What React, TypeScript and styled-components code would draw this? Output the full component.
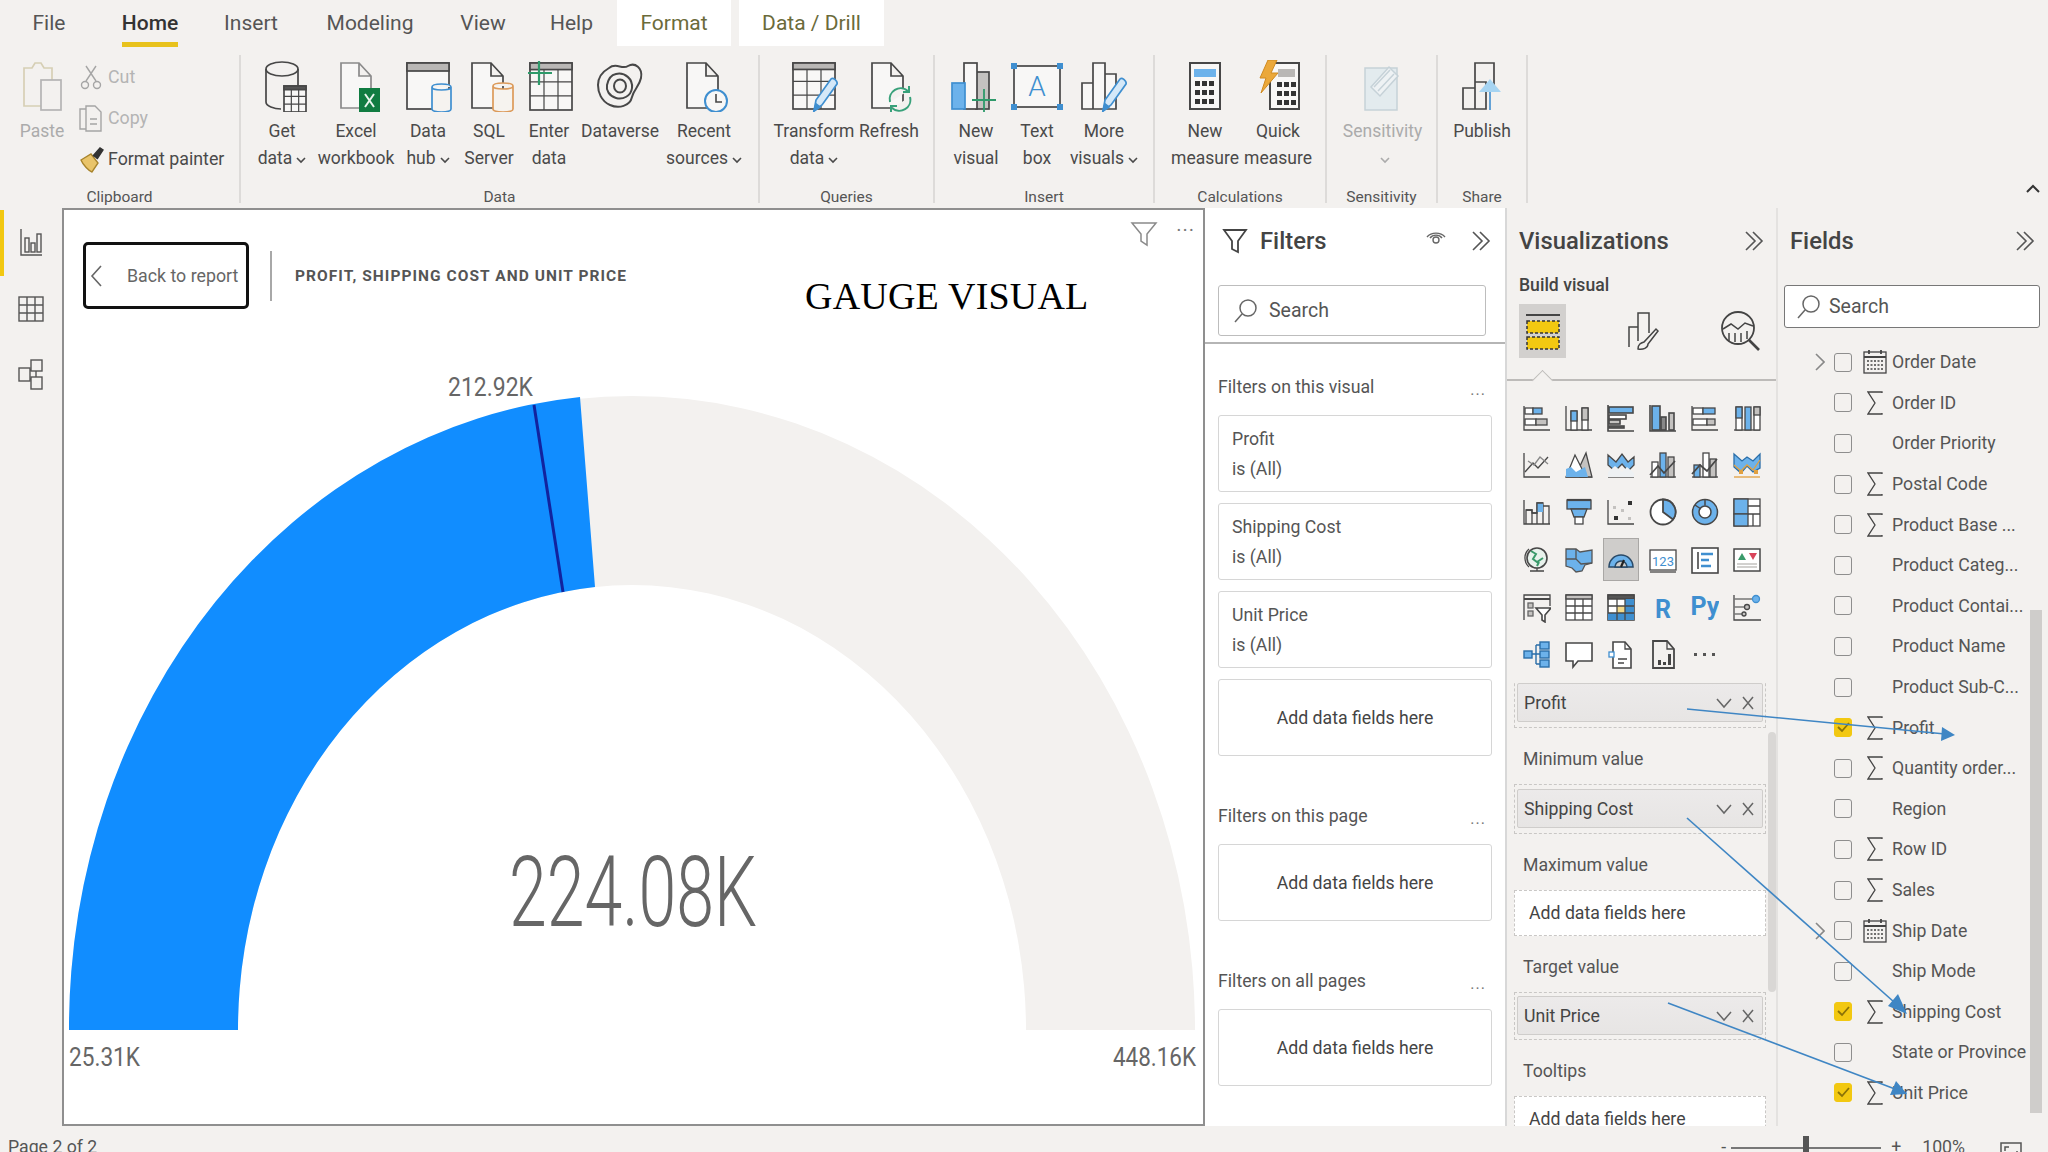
import React from 'react'
import styled, { createGlobalStyle } from 'styled-components'

const BLUE = '#6cb2eb'
const DEEP = '#3f8fd0'
const GREY = '#c4c2c0'
const INK = '#474747'

const GlobalStyle = createGlobalStyle`
  html, body {
    margin: 0;
    padding: 0;
    width: 2048px;
    height: 1152px;
    overflow: hidden;
    background: #f3f1ef;
  }
  * { box-sizing: border-box; }
  body {
    font-family: Roboto, "Liberation Sans", sans-serif;
    color: #4a4a4a;
  }
`

const Shell = styled.div`
  position: relative;
  width: 2048px;
  height: 1152px;
  display: flex;
  flex-direction: column;
  overflow: hidden;
`

/* ---------- tabs ---------- */
const TabBar = styled.div`
  height: 46px;
  display: flex;
  flex: none;
`
const Tab = styled.div<{ $w: number; $active?: boolean; $context?: boolean }>`
  position: relative;
  width: ${p => p.$w}px;
  display: flex;
  align-items: center;
  justify-content: center;
  font-size: 21px;
  color: ${p => (p.$context ? '#6b6b3a' : p.$active ? '#333' : '#555')};
  font-weight: ${p => (p.$active ? 500 : 400)};
  background: ${p => (p.$context ? '#fff' : 'transparent')};
  margin-right: ${p => (p.$context ? 8 : 0)}px;
  ${p =>
    p.$active &&
    `&::after {
      content: '';
      position: absolute;
      left: 24px;
      right: 24px;
      bottom: -1px;
      height: 5px;
      background: #e8c21c;
    }`}
`

/* ---------- ribbon ---------- */
const Ribbon = styled.div`
  height: 162px;
  flex: none;
  display: flex;
  padding-top: 9px;
`
const Group = styled.div<{ $w: number }>`
  width: ${p => p.$w}px;
  height: 148px;
  flex: none;
  display: flex;
  flex-direction: column;
  border-right: 2px solid #dddbd9;
`
const GroupBody = styled.div`
  flex: 1;
  display: flex;
  align-items: flex-start;
`
const GroupLabel = styled.div`
  height: 22px;
  text-align: center;
  font-size: 15.5px;
  line-height: 22px;
  color: #555;
  margin-bottom: -5px;
`
const BigButton = styled.div<{ $w: number; $off?: boolean }>`
  width: ${p => p.$w}px;
  flex: none;
  display: flex;
  flex-direction: column;
  align-items: center;
  padding-top: 5px;
  color: ${p => (p.$off ? '#ababab' : '#4a4a4a')};
`
const ButtonText = styled.div`
  margin-top: 6px;
  font-size: 17.5px;
  line-height: 27px;
  text-align: center;
  white-space: nowrap;
  height: 54px;
`
const Caret = styled.svg`
  width: 10px;
  height: 7px;
  margin-left: 4px;
  fill: none;
  stroke: currentColor;
  stroke-width: 1.6;
`
const RibbonSvg = styled.svg`
  width: 52px;
  height: 52px;
  fill: none;
  stroke: ${INK};
  stroke-width: 1.7;
  flex: none;
`
const SmallColumn = styled.div`
  margin-left: -6px;
  padding-top: 1px;
  display: flex;
  flex-direction: column;
`
const SmallRow = styled.div<{ $off?: boolean }>`
  height: 41px;
  display: flex;
  align-items: center;
  gap: 4px;
  font-size: 17.8px;
  white-space: nowrap;
  color: ${p => (p.$off ? '#b4b4b4' : '#4a4a4a')};
`
const SmallSvg = styled.svg`
  width: 26px;
  height: 28px;
  fill: none;
  stroke: #a5a5a5;
  stroke-width: 1.4;
  flex: none;
`
const RibbonCollapse = styled.svg`
  width: 16px;
  height: 10px;
  margin: 129px 0 0 497px;
  fill: none;
  stroke: #333;
  stroke-width: 2;
`

const Down = () => (
  <Caret viewBox="0 0 10 7">
    <path d="M1 1l4 4 4-4" />
  </Caret>
)

const Table = ({ x, y, w, h, head = '#b9b7b5' }: { x: number; y: number; w: number; h: number; head?: string }) => (
  <g>
    <rect x={x} y={y} width={w} height={h} fill="#f8f7f6" />
    <rect x={x} y={y} width={w} height={h * 0.14} fill={head} />
    <path d={`M${x} ${y + h * 0.4}h${w}M${x} ${y + h * 0.7}h${w}M${x + w / 3} ${y + h * 0.14}v${h * 0.86}M${x + (2 * w) / 3} ${y + h * 0.14}v${h * 0.86}`} strokeWidth="1.2" />
  </g>
)
const Doc = ({ x = 10, w = 32, stroke }: { x?: number; w?: number; stroke?: string }) => (
  <path d={`M${x} 3h${w - 12}l12 13v32h-${w}zM${x + w - 12} 3v13h12`} fill="#f8f7f6" stroke={stroke} />
)
const Can = ({ x, y, w, h, c }: { x: number; y: number; w: number; h: number; c: string }) => (
  <path
    d={`M${x} ${y + 3}c0-4 ${w}-4 ${w} 0v${h - 6}c0 4-${w} 4-${w} 0zM${x} ${y + 3}c0 4 ${w} 4 ${w} 0`}
    stroke={c}
    fill="#f6f3ef"
  />
)
const Pen = ({ dx = 0, dy = 0 }: { dx?: number; dy?: number }) => (
  <g transform={`translate(${dx} ${dy})`}>
    <path d="M23 47l2-11 15-21c2-2 7 2 6 5L31 41z" fill="#d4e8f8" stroke={DEEP} />
    <path d="M23 47l2-7 4 3z" fill={DEEP} stroke={DEEP} />
  </g>
)
const KeyDots = ({ x, y }: { x: number; y: number }) => (
  <g fill="#333" stroke="none">
    {[0, 1, 2].map(r =>
      [0, 1, 2].map(c => <rect key={`${r}${c}`} x={x + c * 7} y={y + r * 9} width="5" height="5" />)
    )}
  </g>
)

const ribbonIcons: Record<string, React.ReactNode> = {
  paste: (
    <g stroke="#d6cfb5">
      <path d="M8 8h8l3-5h6l3 5h8v38H8z" />
      <rect x="25" y="20" width="20" height="30" stroke="#b4b4b4" fill="#f3f1ef" />
    </g>
  ),
  get: (
    <g>
      <ellipse cx="26" cy="9" rx="16" ry="7" />
      <path d="M10 9v33c0 4 8 7 15 7M42 9v17" />
      <Table x={28} y={26} w={22} h={26} head="#555" />
    </g>
  ),
  excel: (
    <g>
      <Doc x={11} w={30} stroke="#8a8a8a" />
      <rect x="29" y="28" width="21" height="24" fill="#107c41" stroke="none" />
      <path d="M35 34l9 13M44 34l-9 13" stroke="#e8f4ec" strokeWidth="2" />
    </g>
  ),
  hub: (
    <g>
      <rect x="5" y="3" width="42" height="46" fill="#f8f7f6" />
      <rect x="5" y="3" width="42" height="8" fill="#b9b7b5" />
      <Can x={30} y={24} w={19} h={28} c={DEEP} />
    </g>
  ),
  sql: (
    <g>
      <Doc x={9} w={31} />
      <Can x={30} y={23} w={20} h={29} c="#dc9a5a" />
    </g>
  ),
  enter: (
    <g>
      <Table x={7} y={3} w={42} h={47} />
      <path d="M16 1v24M5 13h24" stroke="#2e9a6a" strokeWidth="2.2" />
    </g>
  ),
  dataverse: (
    <g strokeWidth="2">
      <path d="M15 8c7-6 13 2 19-2 7-4 15 2 13 12-2 9-7 11-9 19-2 9-13 12-22 8C7 41 4 32 4 25 4 17 8 12 15 8z" />
      <path d="M22 14c9-2 17 5 16 14-1 8-9 12-16 10-7-2-10-8-9-13 1-5 4-10 9-11z" />
      <ellipse cx="26" cy="26" rx="6" ry="6.5" />
    </g>
  ),
  recent: (
    <g>
      <Doc x={9} w={31} />
      <circle cx="38" cy="41" r="11" fill="#f8f7f6" stroke={DEEP} strokeWidth="2" />
      <path d="M38 34v8h6" strokeWidth="1.6" />
    </g>
  ),
  transform: (
    <g>
      <Table x={5} y={3} w={42} h={46} />
      <Pen dx={3} dy={4} />
    </g>
  ),
  refresh: (
    <g>
      <Doc x={9} w={31} />
      <g stroke="#38a17a" strokeWidth="2">
        <path d="M27 42a11 11 0 0 1 18-11" fill="#f3f1ef" />
        <path d="M47 37a11 11 0 0 1-18 11" fill="#f3f1ef" />
        <path d="M46 26v6h-6M28 52v-6h6" />
      </g>
    </g>
  ),
  newvisual: (
    <g>
      <rect x="26" y="12" width="13" height="37" fill={GREY} />
      <rect x="14" y="3" width="13" height="46" fill="#f8f7f6" />
      <rect x="2" y="23" width="13" height="26" fill={BLUE} stroke={DEEP} />
      <path d="M34 29v23M22 40h24" stroke="#2e9a6a" strokeWidth="1.8" />
    </g>
  ),
  textbox: (
    <g>
      <rect x="3" y="6" width="46" height="41" fill="#f8f7f6" />
      <g fill={DEEP} stroke="none">
        <rect x="0" y="3" width="6" height="6" />
        <rect x="46" y="3" width="6" height="6" />
        <rect x="0" y="44" width="6" height="6" />
        <rect x="46" y="44" width="6" height="6" />
      </g>
      <text x="26" y="36" textAnchor="middle" fontSize="28" fontWeight="300" fill={DEEP} stroke="none" fontFamily="Roboto, sans-serif">A</text>
    </g>
  ),
  more: (
    <g>
      <path d="M4 49V23h11v26zM15 49V3h12v46zM27 49V14h11v35z" fill="#f8f7f6" />
      <Pen dx={2} dy={4} />
    </g>
  ),
  measure: (
    <g>
      <rect x="11" y="3" width="30" height="46" fill="#f8f7f6" strokeWidth="2" />
      <rect x="15" y="9" width="22" height="8" fill={BLUE} stroke="none" />
      <KeyDots x={16} y={21} />
    </g>
  ),
  quick: (
    <g>
      <rect x="18" y="3" width="29" height="46" fill="#f8f7f6" strokeWidth="2" />
      <rect x="26" y="9" width="17" height="8" fill="#b9b7b5" stroke="none" />
      <KeyDots x={25} y={22} />
      <path d="M16 0h9l-6 13h7L9 33l5-15H8z" fill="#eba83a" stroke="#d08a20" strokeWidth="1" />
    </g>
  ),
  sensitivity: (
    <g stroke="#c6d2d8">
      <rect x="8" y="8" width="32" height="42" fill="#e3ebee" strokeWidth="1.5" />
      <path d="M14 27L32 7l9 9-18 20z" fill="#eef2f4" strokeWidth="1.5" />
      <path d="M17 27l16-17M21 31l16-17" strokeWidth="1.5" />
    </g>
  ),
  publish: (
    <g>
      <path d="M7 49V28h12v21zM19 49V22h11v27zM19 22V3h19v28" fill="#f3f1ef" />
      <path d="M34 50V22" stroke={DEEP} strokeWidth="1.6" />
      <path d="M23 32l11-13 11 13z" fill="#a6d4f2" stroke="none" />
    </g>
  ),
}

const Big = ({ w, icon, lines, caret, off }: { w: number; icon: string; lines: string[]; caret?: boolean; off?: boolean }) => (
  <BigButton $w={w} $off={off}>
    <RibbonSvg viewBox="0 0 52 52">{ribbonIcons[icon]}</RibbonSvg>
    <ButtonText>
      {lines[0]}
      <br />
      {lines[1]}
      {caret && <Down />}
    </ButtonText>
  </BigButton>
)

/* ---------- main area ---------- */
const Main = styled.div`
  flex: 1;
  min-height: 0;
  display: flex;
`
const NavRail = styled.div`
  width: 62px;
  flex: none;
  padding-top: 2px;
  display: flex;
  flex-direction: column;
`
const NavItem = styled.div<{ $active?: boolean }>`
  height: 66px;
  display: flex;
  align-items: center;
  justify-content: center;
  border-left: 4px solid ${p => (p.$active ? '#f2c811' : 'transparent')};
  padding-right: 4px;
`
const NavSvg = styled.svg`
  width: 26px;
  height: 34px;
  fill: none;
  stroke: #555;
  stroke-width: 1.4;
`
const ReportCanvas = styled.div`
  position: relative;
  width: 1143px;
  flex: none;
  background: #fff;
  border: 2px solid #8f8f8f;
  display: flex;
  flex-direction: column;
`
const CanvasTools = styled.div`
  position: absolute;
  top: 10px;
  right: 8px;
  display: flex;
  align-items: center;
  gap: 18px;
`
const ToolDots = styled.div`
  font-size: 20px;
  letter-spacing: 1px;
  line-height: 12px;
  height: 20px;
  color: #777;
`
const ToolFunnel = styled.svg`
  width: 28px;
  height: 28px;
  fill: none;
  stroke: #8a8a8a;
  stroke-width: 1.5;
`
const CanvasHeader = styled.div`
  display: flex;
  align-items: center;
  padding: 32px 0 0 19px;
  height: 99px;
  flex: none;
`
const BackButton = styled.div`
  width: 166px;
  height: 67px;
  border: 3px solid #111;
  border-radius: 5px;
  display: flex;
  align-items: center;
  padding-left: 4px;
  font-size: 17.8px;
  color: #666;
  white-space: nowrap;
  flex: none;
`
const BackChevron = styled.svg`
  width: 13px;
  height: 24px;
  margin-right: 24px;
  fill: none;
  stroke: #666;
  stroke-width: 1.6;
  flex: none;
`
const HeaderRule = styled.div`
  width: 2px;
  height: 50px;
  margin: 0 23px 0 21px;
  background: #a8a8a8;
`
const ReportTitle = styled.div`
  width: 510px;
  font-size: 15.5px;
  font-weight: 700;
  letter-spacing: 1.05px;
  color: #555;
  white-space: nowrap;
`
const BigTitle = styled.div`
  font-family: "Liberation Serif", serif;
  font-size: 38px;
  letter-spacing: 0.2px;
  color: #000;
  white-space: nowrap;
  margin-top: 40px;
`
const GaugeSvg = styled.svg`
  flex: 1;
  min-height: 0;
  width: 100%;
  display: block;
  font-family: Roboto, "Liberation Sans", sans-serif;
  fill: #666;
`

const Gauge = () => (
  <GaugeSvg viewBox="64 309 1139 815" preserveAspectRatio="none">
    <path d="M69 1030A563 634 0 0 1 1195 1030H1026A394 445 0 0 0 238 1030Z" fill="#f3f1ef" />
    <path d="M69 1030A563 634 0 0 1 580 397L595 587A394 445 0 0 0 238 1030Z" fill="#118dff" />
    <path d="M534 405L563 592" stroke="#12239e" strokeWidth="3" />
    <text x="448" y="396" fontSize="26" textLength="85" lengthAdjust="spacingAndGlyphs">212.92K</text>
    <text x="69" y="1066" fontSize="26" textLength="71" lengthAdjust="spacingAndGlyphs">25.31K</text>
    <text x="1113" y="1066" fontSize="26" textLength="83" lengthAdjust="spacingAndGlyphs">448.16K</text>
    <text x="509" y="926" fontSize="98" fontWeight="300" textLength="248" lengthAdjust="spacingAndGlyphs">224.08K</text>
  </GaugeSvg>
)

/* ---------- panes ---------- */
const PaneHeader = styled.div`
  height: 66px;
  display: flex;
  align-items: center;
  font-size: 23.8px;
  font-weight: 500;
  color: #444;
  flex: none;
`
const PaneTitle = styled.div`
  flex: 1;
`
const DoubleChevron = styled.svg`
  width: 20px;
  height: 22px;
  fill: none;
  stroke: #555;
  stroke-width: 1.6;
  flex: none;
`
const Chevrons = () => (
  <DoubleChevron viewBox="0 0 20 22">
    <path d="M2 2l9 9-9 9M9 2l9 9-9 9" />
  </DoubleChevron>
)
const SearchBox = styled.div<{ $h: number; $w: number; $dark?: boolean }>`
  width: ${p => p.$w}px;
  height: ${p => p.$h}px;
  background: #fff;
  border: 1.5px solid ${p => (p.$dark ? '#777' : '#bdbdbd')};
  border-radius: 3px;
  display: flex;
  align-items: center;
  gap: ${p => (p.$dark ? 9 : 12)}px;
  padding-left: ${p => (p.$dark ? 11 : 14)}px;
  font-size: 19.5px;
  color: #555;
  flex: none;
`
const Loupe = styled.svg`
  width: 24px;
  height: 26px;
  fill: none;
  stroke: #666;
  stroke-width: 1.5;
`
const SearchIcon = () => (
  <Loupe viewBox="0 0 24 26">
    <circle cx="15" cy="10" r="8" />
    <path d="M9 16L2 24" />
  </Loupe>
)

const FiltersPane = styled.div`
  width: 302px;
  flex: none;
  background: #fff;
  border-right: 2px solid #d8d8d8;
  display: flex;
  flex-direction: column;
  overflow: hidden;
`
const FiltersTop = styled.div`
  padding: 0 13px;
  height: 136px;
  border-bottom: 2px solid #b5b5b5;
  flex: none;
`
const FilterHeader = styled(PaneHeader)`
  height: 77px;
  padding-bottom: 11px;
  gap: 12px;
  padding-left: 4px;
  padding-right: 1px;
`
const Funnel = styled.svg`
  width: 26px;
  height: 28px;
  fill: none;
  stroke: #444;
  stroke-width: 1.8;
  flex: none;
`
const EyeSvg = styled.svg`
  width: 22px;
  height: 18px;
  margin: -8px 12px 0 0;
  fill: none;
  stroke: #666;
  stroke-width: 1.4;
`
const FilterBody = styled.div`
  margin-top: 15px;
`
const FilterSection = styled.div`
  padding: 0 13px;
  margin-bottom: 32px;
`
const SectionHead = styled.div`
  height: 56px;
  display: flex;
  align-items: center;
  justify-content: space-between;
  font-size: 17.7px;
  color: #555;
  padding-right: 6px;
`
const More = styled.span`
  letter-spacing: 1px;
  font-size: 16px;
  color: #777;
  margin-top: 4px;
`
const FilterCards = styled.div`
  display: flex;
  flex-direction: column;
  gap: 11px;
`
const FilterCard = styled.div<{ $center?: boolean }>`
  width: 274px;
  height: 77px;
  background: #fff;
  border: 1.5px solid #d6d6d6;
  border-radius: 3px;
  font-size: 17.7px;
  line-height: 30px;
  color: #555;
  display: flex;
  flex-direction: column;
  justify-content: center;
  padding-left: 13px;
  ${p => p.$center && `align-items: center; padding-left: 0; color: #444;`}
`

const VizPane = styled.div`
  position: relative;
  width: 271px;
  flex: none;
  display: flex;
  flex-direction: column;
  border-right: 2px solid #e4e2e0;
`
const VizHead = styled(PaneHeader)`
  padding: 0 12px;
`
const BuildLabel = styled.div`
  font-size: 17.6px;
  font-weight: 500;
  line-height: 22px;
  padding-left: 12px;
  color: #444;
`
const BuildTabs = styled.div`
  height: 54px;
  margin-top: 8px;
  padding-left: 12px;
  display: flex;
  flex: none;
`
const BuildTile = styled.div<{ $selected?: boolean; $w: number }>`
  width: ${p => p.$w}px;
  flex: none;
  display: flex;
  align-items: center;
  justify-content: center;
  background: ${p => (p.$selected ? '#d2d0ce' : 'transparent')};
`
const BuildSvg = styled.svg`
  width: 40px;
  height: 44px;
  flex: none;
  fill: none;
  stroke: #444;
  stroke-width: 1.5;
`
const TabRule = styled.div`
  position: relative;
  margin-top: 21px;
  height: 0;
  border-top: 2px solid #bdbbb9;
  flex: none;
  &::after {
    content: '';
    position: absolute;
    left: 28px;
    top: -8px;
    width: 14px;
    height: 14px;
    background: #f3f1ef;
    border: solid #bdbbb9;
    border-width: 1.5px 0 0 1.5px;
    transform: rotate(45deg);
  }
`
const VizGrid = styled.div`
  margin: 13px 0 0 9px;
  display: grid;
  grid-template-columns: repeat(6, 42px);
  grid-auto-rows: 47.3px;
  flex: none;
`
const VizCell = styled.div<{ $selected?: boolean }>`
  display: flex;
  align-items: center;
  justify-content: center;
  background: ${p => (p.$selected ? '#cfcdcb' : 'transparent')};
  box-shadow: ${p => (p.$selected ? 'inset 0 0 0 1px #a9a7a5' : 'none')};
  margin: ${p => (p.$selected ? '2px 3px' : 0)};
`
const VizSvg = styled.svg`
  width: 28px;
  height: 32px;
  flex: none;
  fill: none;
  stroke: ${INK};
  stroke-width: 1.3;
`
const Wells = styled.div`
  position: relative;
  flex: 1;
  min-height: 0;
  overflow: hidden;
  padding: 0 0 0 7px;
  margin-top: 3px;
`
const WellBox = styled.div<{ $h: number; $white?: boolean }>`
  width: 252px;
  height: ${p => p.$h}px;
  border: 1.5px dashed #c9c7c5;
  display: flex;
  align-items: center;
  padding: 0 2px;
  background: ${p => (p.$white ? '#fff' : 'transparent')};
  font-size: 17.7px;
  color: #444;
  flex: none;
  &:first-child { margin-top: -3px; }
`
const WellHint = styled.span`
  padding-left: 12px;
`
const WellTitle = styled.div`
  height: 56px;
  padding: 6px 0 0 9px;
  display: flex;
  align-items: center;
  font-size: 17.7px;
  color: #555;
`
const Pill = styled.div`
  width: 100%;
  height: 39px;
  background: linear-gradient(#eceaea, #e7e5e4);
  border: 1px solid #cfcdcb;
  border-radius: 2px;
  display: flex;
  align-items: center;
  padding: 0 6px;
  font-size: 17.7px;
  color: #444;
`
const PillText = styled.span`
  flex: 1;
`
const PillMark = styled.svg`
  width: 16px;
  height: 14px;
  margin-left: 8px;
  fill: none;
  stroke: #666;
  stroke-width: 1.5;
`
const WellScroll = styled.div`
  position: absolute;
  top: 51px;
  right: 0;
  width: 8px;
  height: 260px;
  background: #d9d7d5;
  border-radius: 4px;
`

const FieldsPane = styled.div`
  position: relative;
  flex: 1;
  display: flex;
  flex-direction: column;
  padding-left: 6px;
  overflow: hidden;
`
const FieldsHead = styled(PaneHeader)`
  height: 77px;
  padding: 0 13px 11px 6px;
`
const FieldList = styled.div`
  margin-top: 14px;
  display: flex;
  flex-direction: column;
`
const FieldRow = styled.div`
  height: 40.6px;
  display: flex;
  align-items: center;
  flex: none;
`
const FieldCaret = styled.div`
  width: 50px;
  display: flex;
  justify-content: flex-end;
  padding-right: 9px;
  flex: none;
`
const CaretSvg = styled.svg`
  width: 10px;
  height: 20px;
  fill: none;
  stroke: #888;
  stroke-width: 1.6;
`
const CheckBox = styled.div<{ $on?: boolean }>`
  width: 18px;
  height: 19px;
  flex: none;
  border: 1.5px solid ${p => (p.$on ? '#f2c811' : '#8e8e8e')};
  border-radius: 3px;
  background: ${p => (p.$on ? '#f2c811' : 'transparent')};
  display: flex;
  align-items: center;
  justify-content: center;
`
const CheckMark = styled.svg`
  width: 13px;
  height: 11px;
  fill: none;
  stroke: #8a7208;
  stroke-width: 1.8;
`
const TypeSlot = styled.div`
  width: 40px;
  flex: none;
  display: flex;
  justify-content: center;
  padding-left: 6px;
`
const TypeSvg = styled.svg<{ $w: number }>`
  width: ${p => p.$w}px;
  height: 26px;
  fill: none;
  stroke: #444;
  stroke-width: 1.3;
`
const FieldName = styled.div`
  font-size: 17.7px;
  color: #555;
  white-space: nowrap;
`
const FieldsScroll = styled.div`
  position: absolute;
  right: 6px;
  top: 402px;
  width: 12px;
  height: 503px;
  background: #cfcdcb;
`

/* ---------- status bar ---------- */
const StatusBar = styled.div`
  height: 26px;
  flex: none;
  display: flex;
  padding: 10px 26px 0 8px;
  font-size: 17.7px;
  line-height: 22px;
  color: #555;
  overflow: hidden;
`
const StatusText = styled.div`
  flex: 1;
`
const ZoomMark = styled.div`
  width: 10px;
`
const ZoomTrack = styled.div`
  position: relative;
  width: 150px;
  height: 2px;
  background: #777;
  margin: 11px 10px 0 0;
  &::after {
    content: '';
    position: absolute;
    left: 72px;
    top: -11px;
    width: 6px;
    height: 30px;
    background: #555;
  }
`
const ZoomPercent = styled.div`
  margin: 0 35px 0 21px;
`
const FitSvg = styled.svg`
  width: 22px;
  height: 22px;
  margin-top: 4px;
  fill: none;
  stroke: #555;
  stroke-width: 1.5;
`

/* annotation arrows sit over the panes */
const ArrowLayer = styled.svg`
  position: absolute;
  left: 0;
  top: 0;
  width: 2048px;
  height: 1152px;
  pointer-events: none;
`

const vizIcons: React.ReactNode[] = [
  <g><path d="M1 3v24h26" /><rect x="2" y="5" width="8" height="6" fill="#fff" /><rect x="10" y="5" width="9" height="6" fill={BLUE} /><rect x="2" y="16" width="11" height="6" fill="#fff" /><rect x="13" y="16" width="11" height="6" fill={GREY} /></g>,
  <g><path d="M1 3v24h26" /><rect x="6" y="8" width="6" height="19" fill="#fff" /><rect x="6" y="8" width="6" height="10" fill={BLUE} /><rect x="17" y="5" width="6" height="22" fill="#fff" /><rect x="17" y="5" width="6" height="12" fill={GREY} /></g>,
  <g strokeWidth="1.6"><path d="M1 2v26h26" /><rect x="2" y="4" width="24" height="6" fill={BLUE} /><rect x="2" y="12" width="17" height="4" fill="#fff" /><rect x="2" y="17" width="11" height="4" fill={GREY} /><rect x="2" y="23" width="15" height="2" fill="#777" /></g>,
  <g strokeWidth="1.6"><path d="M1 2v26h26" /><rect x="3" y="3" width="8" height="24" fill={BLUE} /><rect x="12" y="14" width="5" height="13" fill="#888" /><rect x="20" y="10" width="5" height="17" fill={GREY} /></g>,
  <g><path d="M1 3v24h26" /><rect x="2" y="5" width="10" height="6" fill="#fff" /><rect x="12" y="5" width="12" height="6" fill={BLUE} /><rect x="2" y="16" width="14" height="6" fill="#fff" /><rect x="16" y="16" width="8" height="6" fill={GREY} /></g>,
  <g><path d="M1 27h26" /><rect x="3" y="4" width="6" height="23" fill="#fff" /><rect x="3" y="4" width="6" height="11" fill={BLUE} /><rect x="12" y="4" width="6" height="23" fill={BLUE} /><rect x="21" y="4" width="6" height="23" fill="#fff" /><rect x="21" y="4" width="6" height="8" fill={GREY} /></g>,
  <g><path d="M1 3v24h26" /><path d="M2 22l8-9 5 5 10-11" /><path d="M5 11l6 4 6-8 8 7" stroke="#888" /></g>,
  <g><path d="M1 27h26" /><path d="M15 16L21 3l6 24H15z" fill={GREY} /><path d="M1 27L10 5l11 22z" fill="#fff" /><path d="M1 27v-8l5-2 5 5 9-5 3 10z" fill={BLUE} stroke="none" /></g>,
  <g><path d="M1 27h26" /><path d="M1 5l8 7 6-8 6 8 6-5v8l-6 6-6-7-7 7-7-6z" fill={BLUE} /><path d="M1 22l7-6 7 6 5-5 7 6v4H1z" fill="#eef1f3" stroke="none" /></g>,
  <g><path d="M1 27h26" /><rect x="3" y="12" width="6" height="15" fill="#fff" /><rect x="11" y="3" width="6" height="24" fill={BLUE} /><rect x="19" y="7" width="6" height="20" fill={GREY} /><path d="M1 25l8-9 6 7 11-12" strokeWidth="1.8" /></g>,
  <g><path d="M1 27h26" /><rect x="3" y="15" width="6" height="12" fill={BLUE} /><rect x="12" y="3" width="6" height="24" fill="#fff" /><rect x="19" y="9" width="6" height="18" fill={GREY} /><path d="M1 24l8-9 7 6 10-12" strokeWidth="1.8" /></g>,
  <g><path d="M1 27h26" stroke="#e0a040" /><path d="M1 4l8 7 5-4 6 4 7-7v14l-7 4-6-6-6 7-7-6z" fill={BLUE} stroke="#2a6ea8" /><path d="M1 15l7 6 6-6 6 5 7-10" stroke="#e0a040" /><rect x="6" y="20" width="4" height="4" fill="#e0a040" stroke="none" /><rect x="21" y="20" width="4" height="4" fill="#e0a040" stroke="none" /></g>,
  <g><path d="M1 3v24h26" /><path d="M3 27V13h6v14M9 27V16h5v11M14 27V6h6v21M20 27V9h6v18" /><rect x="14" y="6" width="6" height="9" fill={BLUE} stroke="none" /><path d="M3 13h6v3h5V6h6" /></g>,
  <g><rect x="2" y="3" width="24" height="9" fill={BLUE} /><path d="M2 3h24" strokeWidth="2.2" /><path d="M6 12h16l-3 8H9z" fill={BLUE} /><rect x="10" y="20" width="8" height="7" fill="#fff" /></g>,
  <g><path d="M1 3v24h26" /><rect x="7" y="19" width="4" height="4" fill="#333" stroke="none" /><rect x="21" y="4" width="4" height="4" fill="#333" stroke="none" /><g fill={GREY} stroke="none"><rect x="6" y="9" width="3" height="3" /><rect x="14" y="12" width="3" height="3" /><rect x="21" y="20" width="3" height="3" /></g></g>,
  <g strokeWidth="1.8"><circle cx="14" cy="15" r="12.5" fill="#fff" /><path d="M14 2.5a12.5 12.5 0 0 1 10 20L14 15z" fill={BLUE} /></g>,
  <g strokeWidth="1.5"><circle cx="14" cy="15" r="12.5" fill={BLUE} /><circle cx="14" cy="15" r="6" fill="#fff" /><path d="M4 8l6 4M14 2.5v6" stroke={INK} /></g>,
  <g><rect x="1" y="2" width="26" height="27" fill="#fff" /><rect x="1" y="2" width="14" height="15" fill={BLUE} /><rect x="1" y="17" width="14" height="12" fill={BLUE} /><path d="M15 9h12M20 17v12M15 17h12" /></g>,
  <g><circle cx="14" cy="13" r="10" fill="#e8f2ec" strokeWidth="1.6" /><path d="M8 6l5 3-3 5 4 3 6-4M14 21l2-4" stroke="#3a9a6a" strokeWidth="2" /><path d="M7 26h14M14 23v3M6 4a12 12 0 0 0 0 18" /></g>,
  <g><path d="M1 4h10l4 3 12-2v13l-7 2-3 6-6 1-4-4-6-2z" fill={BLUE} stroke="#555" /><path d="M11 4v10l5 5 11-1M1 14h10" stroke="#555" /></g>,
  <g strokeWidth="1.6"><path d="M2 22a12 12 0 0 1 24 0z" fill={BLUE} stroke="#2a4a68" /><path d="M8 22a6 6 0 0 1 12 0z" fill="#cfcdcb" stroke="#2a4a68" /><path d="M14 22l3-7" stroke="#222" strokeWidth="2.2" /></g>,
  <g><rect x="1" y="5" width="26" height="20" fill="#fff" /><path d="M1 27h26" /><text x="14" y="21" textAnchor="middle" fontSize="13" fill={DEEP} stroke="none" fontFamily="Roboto, sans-serif">123</text></g>,
  <g strokeWidth="1.6"><rect x="1" y="3" width="26" height="25" fill="#fff" /><path d="M7 7v17" /><path d="M10 9h12M10 15h8M10 21h10" stroke={DEEP} strokeWidth="2.4" /></g>,
  <g><rect x="1" y="4" width="26" height="22" fill="#fff" strokeWidth="1.5" /><path d="M9 8l4 7H5z" fill="#3a9a6a" stroke="none" /><path d="M16 8h8l-4 7z" fill="#d9435a" stroke="none" /><path d="M4 19h20M4 22h20" stroke={GREY} /></g>,
  <g><path d="M1 28V3h26v11" /><path d="M1 7h26" strokeWidth="2" /><rect x="5" y="11" width="5" height="5" fill={GREY} stroke="#666" /><rect x="5" y="19" width="5" height="5" fill={GREY} stroke="#666" /><path d="M13 16h15l-6 7v7l-3-2v-5z" fill="#fff" strokeWidth="1.6" /></g>,
  <g><rect x="1" y="3" width="26" height="25" fill="#fff" /><path d="M1 3h26v4H1z" fill={GREY} /><path d="M1 14h26M1 21h26M10 7v21M18 7v21" /></g>,
  <g><rect x="1" y="3" width="26" height="25" fill="#fff" strokeWidth="1.6" /><path d="M1 3h26v4H1z" fill="#555" /><rect x="10" y="14" width="8" height="7" fill="#f2d98a" stroke="none" /><rect x="18" y="7" width="9" height="21" fill={DEEP} stroke="none" /><rect x="1" y="21" width="17" height="7" fill={DEEP} stroke="none" /><path d="M1 14h26M1 21h26M10 7v21M18 7v21" /></g>,
  <text x="14" y="26" textAnchor="middle" fontSize="25" fontWeight="700" fill={DEEP} stroke="none" fontFamily="Roboto, sans-serif">R</text>,
  <text x="14" y="23" textAnchor="middle" fontSize="25" fontWeight="700" fill={DEEP} stroke="none" fontFamily="Roboto, sans-serif">Py</text>,
  <g><path d="M1 3v25h27" /><path d="M1 7h18M1 15h10M1 22h8" stroke="#777" /><circle cx="23" cy="7" r="3.5" fill={BLUE} stroke={DEEP} /><circle cx="14" cy="15" r="2.5" fill={GREY} /><circle cx="11" cy="22" r="2" fill={GREY} /></g>,
  <g fill={BLUE} stroke="#2a6ea8" strokeWidth="1.4"><rect x="1" y="12" width="8" height="7" /><rect x="17" y="3" width="9" height="7" /><rect x="17" y="12" width="9" height="7" /><rect x="17" y="21" width="9" height="7" /><path d="M9 15h8M13 6v19M13 6h4M13 25h4" fill="none" /></g>,
  <path d="M1 4h26v18H13l-5 6v-6H1z" fill="#fff" strokeWidth="1.6" />,
  <g><path d="M6 3h12l6 7v19H6z" fill="#fff" strokeWidth="1.6" /><path d="M18 3v7h6" /><path d="M11 20h9M11 24h6" /><rect x="2" y="13" width="5" height="5" fill="#fff" stroke={DEEP} /></g>,
  <g><path d="M4 2h14l7 8v19H4z" fill="#f3f1ef" strokeWidth="1.8" /><path d="M18 2v8h7" /><g fill="#444" stroke="none"><rect x="9" y="21" width="3" height="5" /><rect x="14" y="23" width="3" height="3" /><rect x="19" y="15" width="3" height="11" /></g></g>,
  <g fill="#555" stroke="none"><rect x="3" y="14" width="3" height="3" /><rect x="12" y="14" width="3" height="3" /><rect x="21" y="14" width="3" height="3" /></g>,
]

const fields: { name: string; kind?: 'sum' | 'date'; caret?: boolean; on?: boolean }[] = [
  { name: 'Order Date', kind: 'date', caret: true },
  { name: 'Order ID', kind: 'sum' },
  { name: 'Order Priority' },
  { name: 'Postal Code', kind: 'sum' },
  { name: 'Product Base ...', kind: 'sum' },
  { name: 'Product Categ...' },
  { name: 'Product Contai...' },
  { name: 'Product Name' },
  { name: 'Product Sub-C...' },
  { name: 'Profit', kind: 'sum', on: true },
  { name: 'Quantity order...', kind: 'sum' },
  { name: 'Region' },
  { name: 'Row ID', kind: 'sum' },
  { name: 'Sales', kind: 'sum' },
  { name: 'Ship Date', kind: 'date', caret: true },
  { name: 'Ship Mode' },
  { name: 'Shipping Cost', kind: 'sum', on: true },
  { name: 'State or Province' },
  { name: 'Unit Price', kind: 'sum', on: true },
]

const TypeIcon = ({ kind }: { kind?: 'sum' | 'date' }) => {
  if (kind === 'sum')
    return (
      <TypeSvg $w={16} viewBox="0 0 16 26">
        <path d="M15 3V2H1l7 11-7 11h14v-1" />
      </TypeSvg>
    )
  if (kind === 'date')
    return (
      <TypeSvg $w={24} viewBox="0 0 24 26">
        <rect x="1" y="3" width="22" height="21" />
        <path d="M1 8h22M6 1v4M18 1v4" strokeWidth="1.8" />
        <path d="M4 12h16M4 16h16M4 20h16" strokeDasharray="2 1.5" />
      </TypeSvg>
    )
  return null
}

const PillBody = ({ label }: { label: string }) => (
  <Pill>
    <PillText>{label}</PillText>
    <PillMark viewBox="0 0 16 14">
      <path d="M1 3l7 8 7-8" />
    </PillMark>
    <PillMark viewBox="0 0 16 14">
      <path d="M3 1l10 12M13 1L3 13" />
    </PillMark>
  </Pill>
)

const Arrow = ({ d, tip }: { d: string; tip: string }) => (
  <g>
    <path d={d} fill="none" stroke="#3f86c4" strokeWidth="1.6" />
    <polygon points={tip} fill="#3f86c4" />
  </g>
)

function App() {
  return (
    <Shell>
      <GlobalStyle />
      <TabBar>
        <Tab $w={98}>File</Tab>
        <Tab $w={104} $active>Home</Tab>
        <Tab $w={98}>Insert</Tab>
        <Tab $w={140}>Modeling</Tab>
        <Tab $w={86}>View</Tab>
        <Tab $w={91}>Help</Tab>
        <Tab $w={114} $context>Format</Tab>
        <Tab $w={145} $context>Data / Drill</Tab>
      </TabBar>

      <Ribbon>
        <Group $w={241}>
          <GroupBody>
            <Big w={84} icon="paste" lines={['Paste', '']} off />
            <SmallColumn>
              <SmallRow $off>
                <SmallSvg viewBox="0 0 26 28">
                  <path d="M8 3l10 15M18 3L8 18" />
                  <circle cx="7" cy="22" r="3.5" />
                  <circle cx="19" cy="22" r="3.5" />
                </SmallSvg>
                Cut
              </SmallRow>
              <SmallRow $off>
                <SmallSvg viewBox="0 0 26 28">
                  <path d="M8 5H2v20h6" />
                  <path d="M8 2h9l6 6v19H8zM12 15h7M12 20h7" />
                </SmallSvg>
                Copy
              </SmallRow>
              <SmallRow>
                <SmallSvg viewBox="0 0 26 28">
                  <path d="M3 15l10-6 7 9-6 9c-3-1-9-7-11-12z" fill="#e9c46a" stroke="#a8842c" />
                  <path d="M15 11l7-8 3 2-6 9" fill="#333" stroke="#333" />
                </SmallSvg>
                Format painter
              </SmallRow>
            </SmallColumn>
          </GroupBody>
          <GroupLabel>Clipboard</GroupLabel>
        </Group>

        <Group $w={519}>
          <GroupBody>
            <Big w={82} icon="get" lines={['Get', 'data']} caret />
            <Big w={66} icon="excel" lines={['Excel', 'workbook']} />
            <Big w={78} icon="hub" lines={['Data', 'hub']} caret />
            <Big w={44} icon="sql" lines={['SQL', 'Server']} />
            <Big w={76} icon="enter" lines={['Enter', 'data']} />
            <Big w={66} icon="dataverse" lines={['Dataverse', '']} />
            <Big w={102} icon="recent" lines={['Recent', 'sources']} caret />
          </GroupBody>
          <GroupLabel>Data</GroupLabel>
        </Group>

        <Group $w={175}>
          <GroupBody>
            <Big w={108} icon="transform" lines={['Transform', 'data']} caret />
            <Big w={42} icon="refresh" lines={['Refresh', '']} />
          </GroupBody>
          <GroupLabel>Queries</GroupLabel>
        </Group>

        <Group $w={220}>
          <GroupBody>
            <Big w={82} icon="newvisual" lines={['New', 'visual']} />
            <Big w={40} icon="textbox" lines={['Text', 'box']} />
            <Big w={94} icon="more" lines={['More', 'visuals']} caret />
          </GroupBody>
          <GroupLabel>Insert</GroupLabel>
        </Group>

        <Group $w={172}>
          <GroupBody>
            <Big w={100} icon="measure" lines={['New', 'measure']} />
            <Big w={46} icon="quick" lines={['Quick', 'measure']} />
          </GroupBody>
          <GroupLabel>Calculations</GroupLabel>
        </Group>

        <Group $w={111}>
          <GroupBody>
            <Big w={111} icon="sensitivity" lines={['Sensitivity', '']} caret off />
          </GroupBody>
          <GroupLabel>Sensitivity</GroupLabel>
        </Group>

        <Group $w={90}>
          <GroupBody>
            <Big w={88} icon="publish" lines={['Publish', '']} />
          </GroupBody>
          <GroupLabel>Share</GroupLabel>
        </Group>

        <RibbonCollapse viewBox="0 0 16 10">
          <path d="M2 8l6-6 6 6" />
        </RibbonCollapse>
      </Ribbon>

      <Main>
        <NavRail>
          <NavItem $active>
            <NavSvg viewBox="0 0 26 34">
              <path d="M3 3v26h21" />
              <rect x="7" y="12" width="4" height="14" />
              <rect x="13" y="17" width="4" height="9" />
              <rect x="19" y="8" width="4" height="18" />
            </NavSvg>
          </NavItem>
          <NavItem>
            <NavSvg viewBox="0 0 26 34">
              <rect x="1" y="5" width="24" height="24" />
              <path d="M1 13h24M1 21h24M9 5v24M17 5v24" />
            </NavSvg>
          </NavItem>
          <NavItem>
            <NavSvg viewBox="0 0 26 34">
              <rect x="13" y="2" width="11" height="11" />
              <rect x="1" y="10" width="11" height="13" />
              <rect x="13" y="19" width="11" height="12" />
              <path d="M12 12h1M12 21h1M18 13v6" />
            </NavSvg>
          </NavItem>
        </NavRail>

        <ReportCanvas>
          <CanvasTools>
            <ToolFunnel viewBox="0 0 28 28">
              <path d="M2 3h24l-9 11v11l-6-4v-7z" />
            </ToolFunnel>
            <ToolDots>···</ToolDots>
          </CanvasTools>
          <CanvasHeader>
            <BackButton>
              <BackChevron viewBox="0 0 13 24">
                <path d="M11 2L2 12l9 10" />
              </BackChevron>
              Back to report
            </BackButton>
            <HeaderRule />
            <ReportTitle>PROFIT, SHIPPING COST AND UNIT PRICE</ReportTitle>
            <BigTitle>GAUGE VISUAL</BigTitle>
          </CanvasHeader>
          <Gauge />
        </ReportCanvas>

        <FiltersPane>
          <FiltersTop>
            <FilterHeader>
              <Funnel viewBox="0 0 26 28">
                <path d="M2 3h22l-8 11v11l-6-3v-8z" />
              </Funnel>
              <PaneTitle>Filters</PaneTitle>
              <EyeSvg viewBox="0 0 22 18">
                <path d="M2 9a11 9 0 0 1 18 0" />
                <path d="M5 10a7 6 0 0 1 12 0" />
                <circle cx="11" cy="12" r="3" />
              </EyeSvg>
              <Chevrons />
            </FilterHeader>
            <SearchBox $w={268} $h={51}>
              <SearchIcon />
              Search
            </SearchBox>
          </FiltersTop>

          <FilterBody>
            <FilterSection>
              <SectionHead>
                Filters on this visual <More>...</More>
              </SectionHead>
              <FilterCards>
                <FilterCard>
                  <span>Profit</span>
                  <span>is (All)</span>
                </FilterCard>
                <FilterCard>
                  <span>Shipping Cost</span>
                  <span>is (All)</span>
                </FilterCard>
                <FilterCard>
                  <span>Unit Price</span>
                  <span>is (All)</span>
                </FilterCard>
                <FilterCard $center>Add data fields here</FilterCard>
              </FilterCards>
            </FilterSection>
            <FilterSection>
              <SectionHead>
                Filters on this page <More>...</More>
              </SectionHead>
              <FilterCard $center>Add data fields here</FilterCard>
            </FilterSection>
            <FilterSection>
              <SectionHead>
                Filters on all pages <More>...</More>
              </SectionHead>
              <FilterCard $center>Add data fields here</FilterCard>
            </FilterSection>
          </FilterBody>
        </FiltersPane>

        <VizPane>
          <VizHead>
            <PaneTitle>Visualizations</PaneTitle>
            <Chevrons />
          </VizHead>
          <BuildLabel>Build visual</BuildLabel>
          <BuildTabs>
            <BuildTile $w={47} $selected>
              <BuildSvg viewBox="0 0 40 44">
                <path d="M3 6h34" strokeWidth="2" />
                <rect x="4" y="12" width="32" height="12" fill="#f2c811" stroke="#333" strokeDasharray="3 2" />
                <rect x="4" y="28" width="32" height="12" fill="#f2c811" stroke="#333" strokeDasharray="3 2" />
              </BuildSvg>
            </BuildTile>
            <BuildTile $w={154}>
              <BuildSvg viewBox="0 0 40 44">
                <path d="M6 38V18h9V4h11v20M15 18v14" />
                <path d="M15 40c0-5 3-6 6-7l12-13 2 2-10 13c0 4-5 6-10 5z" />
              </BuildSvg>
            </BuildTile>
            <BuildTile $w={40}>
              <BuildSvg viewBox="0 0 40 44">
                <circle cx="18" cy="19" r="16" strokeWidth="1.8" />
                <path d="M3 20l8-5 7 5 7-6 8 3M9 24v8M15 24v9M21 24v9M27 22v8" />
                <path d="M29 31l10 10" strokeWidth="2.6" />
              </BuildSvg>
            </BuildTile>
          </BuildTabs>
          <TabRule />
          <VizGrid>
            {vizIcons.map((icon, i) => (
              <VizCell key={i} $selected={i === 20}>
                <VizSvg viewBox="0 0 28 30">{icon}</VizSvg>
              </VizCell>
            ))}
          </VizGrid>
          <Wells>
            <WellBox $h={50}>
              <PillBody label="Profit" />
            </WellBox>
            <WellTitle>Minimum value</WellTitle>
            <WellBox $h={50}>
              <PillBody label="Shipping Cost" />
            </WellBox>
            <WellTitle>Maximum value</WellTitle>
            <WellBox $h={46} $white>
              <WellHint>Add data fields here</WellHint>
            </WellBox>
            <WellTitle>Target value</WellTitle>
            <WellBox $h={48}>
              <PillBody label="Unit Price" />
            </WellBox>
            <WellTitle>Tooltips</WellTitle>
            <WellBox $h={46} $white>
              <WellHint>Add data fields here</WellHint>
            </WellBox>
            <WellScroll />
          </Wells>
        </VizPane>

        <FieldsPane>
          <FieldsHead>
            <PaneTitle>Fields</PaneTitle>
            <Chevrons />
          </FieldsHead>
          <SearchBox $w={256} $h={43} $dark>
            <SearchIcon />
            Search
          </SearchBox>
          <FieldList>
            {fields.map(f => (
              <FieldRow key={f.name}>
                <FieldCaret>
                  {f.caret && (
                    <CaretSvg viewBox="0 0 10 20">
                      <path d="M1 2l8 8-8 8" />
                    </CaretSvg>
                  )}
                </FieldCaret>
                <CheckBox $on={f.on}>
                  {f.on && (
                    <CheckMark viewBox="0 0 13 11">
                      <path d="M1 5l4 4 7-8" />
                    </CheckMark>
                  )}
                </CheckBox>
                <TypeSlot>
                  <TypeIcon kind={f.kind} />
                </TypeSlot>
                <FieldName>{f.name}</FieldName>
              </FieldRow>
            ))}
          </FieldList>
          <FieldsScroll />
        </FieldsPane>
      </Main>

      <StatusBar>
        <StatusText>Page 2 of 2</StatusText>
        <ZoomMark>-</ZoomMark>
        <ZoomTrack />
        <ZoomMark>+</ZoomMark>
        <ZoomPercent>100%</ZoomPercent>
        <FitSvg viewBox="0 0 22 22">
          <rect x="1" y="3" width="20" height="16" />
          <path d="M5 11V7h4M17 11v4h-4" />
        </FitSvg>
      </StatusBar>

      <ArrowLayer viewBox="0 0 2048 1152">
        <Arrow d="M1687 709L1945 734" tip="1955,735 1942,727 1941,741" />
        <Arrow d="M1687 818L1894 1002" tip="1907,1014 1898,994 1888,1006" />
        <Arrow d="M1668 1003L1895 1089" tip="1907,1094 1896,1081 1890,1095" />
      </ArrowLayer>
    </Shell>
  )
}

export default App
